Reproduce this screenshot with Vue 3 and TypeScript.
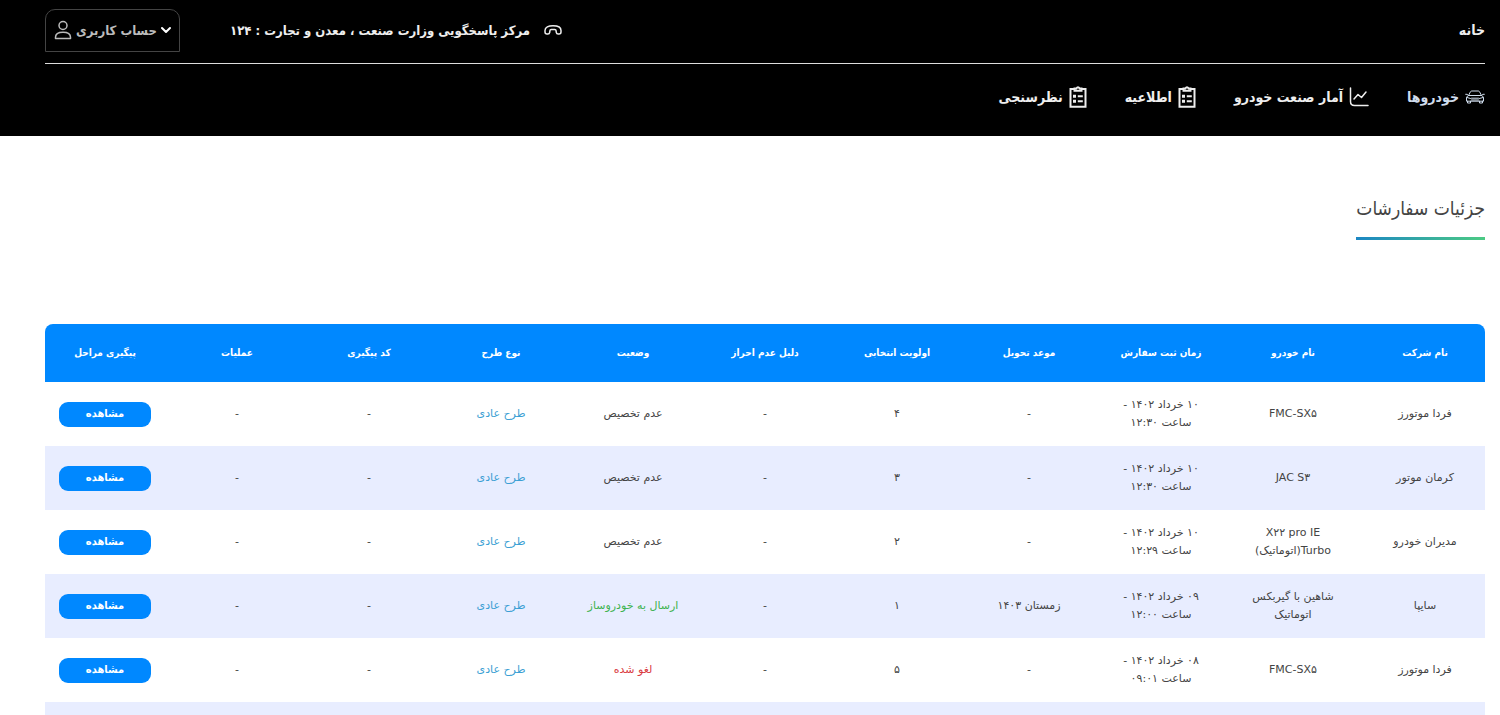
<script setup lang="ts">
type Tone = 'plain' | 'success' | 'danger'

interface Order {
  company: string
  car: string[]
  registered: string[]
  delivery: string
  priority: string
  status: string
  tone: Tone
}

const columns: string[] = [
  'نام شرکت',
  'نام خودرو',
  'زمان ثبت سفارش',
  'موعد تحویل',
  'اولویت انتخابی',
  'دلیل عدم احراز',
  'وضعیت',
  'نوع طرح',
  'کد پیگیری',
  'عملیات',
  'پیگیری مراحل',
]

const orders: Order[] = [
  { company: 'فردا موتورز', car: ['FMC-SX۵'], registered: ['۱۰ خرداد ۱۴۰۲ -', 'ساعت ۱۲:۳۰'], delivery: '-', priority: '۴', status: 'عدم تخصیص', tone: 'plain' },
  { company: 'کرمان موتور', car: ['JAC S۳'], registered: ['۱۰ خرداد ۱۴۰۲ -', 'ساعت ۱۲:۳۰'], delivery: '-', priority: '۳', status: 'عدم تخصیص', tone: 'plain' },
  { company: 'مدیران خودرو', car: ['X۲۲ pro IE', 'Turbo(اتوماتیک)'], registered: ['۱۰ خرداد ۱۴۰۲ -', 'ساعت ۱۲:۲۹'], delivery: '-', priority: '۲', status: 'عدم تخصیص', tone: 'plain' },
  { company: 'سایپا', car: ['شاهین با گیربکس', 'اتوماتیک'], registered: ['۰۹ خرداد ۱۴۰۲ -', 'ساعت ۱۲:۰۰'], delivery: 'زمستان ۱۴۰۳', priority: '۱', status: 'ارسال به خودروساز', tone: 'success' },
  { company: 'فردا موتورز', car: ['FMC-SX۵'], registered: ['۰۸ خرداد ۱۴۰۲ -', 'ساعت ۰۹:۰۱'], delivery: '-', priority: '۵', status: 'لغو شده', tone: 'danger' },
]
</script>

<template>
  <div class="page" dir="rtl" lang="fa">
    <header class="site-header">
      <div class="top-bar">
        <a class="home" href="#">خانه</a>
        <div class="top-end">
          <p class="hotline">
            <svg class="phone" viewBox="0 0 18 12" aria-hidden="true">
              <path d="M1 6.500C1 3 4.500 1.800 9 1.800S17 3 17 6.500V8q0 2-2 2h-.8q-1.700 0-1.900-1.700L12.100 6.800Q12 5.500 10.700 5.500H7.300Q6 5.500 5.900 6.800L5.700 8.300Q5.500 10 3.800 10H3Q1 10 1 8Z" />
            </svg>
            <span>مرکز پاسخگویی وزارت صنعت ، معدن و تجارت : ۱۲۴</span>
          </p>
          <button class="account" type="button">
            <svg class="chevron" viewBox="0 0 10 8" aria-hidden="true"><path d="M1 2l4 4 4-4" /></svg>
            <span>حساب کاربری</span>
            <svg class="user" viewBox="0 0 18 20" aria-hidden="true">
              <circle cx="9" cy="5.500" r="4" />
              <path d="M1.500 18.500v-1.200c0-3 2.500-5 7.500-5s7.500 2 7.500 5v1.200Z" />
            </svg>
          </button>
        </div>
      </div>
      <nav class="main-nav">
        <a class="active" href="#">
          <svg class="car" viewBox="0 0 20 14" aria-hidden="true">
            <path d="M3.500 5.500L5.500 1.700Q5.900 1 6.700 1h6.600q.8 0 1.200.7L16.500 5.500M.7 4.300h1.500l1.300 1.200h13l1.300-1.200h1.500M3.500 5.500Q1.500 6.200 1.500 8v3.200h17V8q0-1.800-2-2.500M2.500 11.200V13h3v-1.800M14.500 11.200V13h3v-1.800M6.500 8.200h7M6.500 10h7M2 7.500l3.500 1M18 7.500l-3.500 1" />
          </svg>
          <span>خودروها</span>
        </a>
        <a href="#">
          <svg class="chart" viewBox="0 0 20 20" aria-hidden="true">
            <path d="M1.500 1v13.500q0 4 4 4H19M5 12l4-4.500 3.500 3 4.500-5.500" />
          </svg>
          <span>آمار صنعت خودرو</span>
        </a>
        <a v-for="label in ['اطلاعیه', 'نظرسنجی']" :key="label" href="#">
          <svg class="clipboard" viewBox="0 0 18 22" aria-hidden="true">
            <path d="M5.500 3H1.500v17.800h15V3h-4M5.500 4.800V2.500h1.800Q9-.2 10.700 2.500h1.800v2.300ZM8.800 10.200h5M8.800 15.200h5" />
            <path class="solid" d="M4 8.700h3v3H4ZM4 13.700h3v3H4Z" />
          </svg>
          <span>{{ label }}</span>
        </a>
      </nav>
    </header>

    <main class="content">
      <h1>جزئیات سفارشات</h1>
      <table class="orders">
        <thead>
          <tr>
            <th v-for="column in columns" :key="column" scope="col">{{ column }}</th>
          </tr>
        </thead>
        <tbody>
          <tr v-for="(order, i) in orders" :key="i">
            <td>{{ order.company }}</td>
            <td><div v-for="line in order.car" :key="line">{{ line }}</div></td>
            <td><div v-for="line in order.registered" :key="line">{{ line }}</div></td>
            <td>{{ order.delivery }}</td>
            <td>{{ order.priority }}</td>
            <td>-</td>
            <td :class="order.tone">{{ order.status }}</td>
            <td class="plan">طرح عادی</td>
            <td>-</td>
            <td>-</td>
            <td><button class="view" type="button">مشاهده</button></td>
          </tr>
          <tr aria-hidden="true"><td :colspan="columns.length"></td></tr>
        </tbody>
      </table>
    </main>
  </div>
</template>

<style>
body {
  margin: 0;
  background: #fff;
}
</style>

<style scoped>
.page {
  height: 100vh;
  overflow: hidden;
  font-family: "DejaVu Sans Condensed", "DejaVu Sans", sans-serif;
  color: #444;
}

svg {
  flex: none;
  fill: none;
  stroke: currentColor;
  stroke-width: 1.500;
  stroke-linecap: round;
  stroke-linejoin: round;
}

a {
  color: inherit;
  text-decoration: none;
}

.site-header {
  box-sizing: border-box;
  height: 136px;
  padding: 0 15px 0 45px;
  background: #000;
  color: #eee;
  font-size: 14px;
  font-weight: 700;
}

.top-bar {
  box-sizing: border-box;
  display: flex;
  align-items: center;
  justify-content: space-between;
  height: 64px;
  padding-bottom: 3px;
  border-bottom: 1px solid #ddd;
}

.top-end {
  display: flex;
  align-items: center;
  gap: 50px;
  font-size: 13px;
}

.hotline {
  display: flex;
  align-items: center;
  gap: 14px;
  margin: 0;
}

.phone {
  width: 18px;
  height: 12px;
}

.account {
  box-sizing: border-box;
  display: flex;
  align-items: center;
  justify-content: space-between;
  width: 135px;
  height: 43px;
  padding: 0 8px;
  border: 1px solid #444;
  border-radius: 10px 10px 0 0;
  background: #000;
  color: #bbb;
  font: inherit;
}

.chevron {
  width: 10px;
  height: 8px;
  color: #fff;
  stroke-width: 2;
}

.user {
  width: 18px;
  height: 20px;
}

.main-nav {
  display: flex;
  align-items: center;
  gap: 38px;
  height: 66px;
}

.main-nav a {
  display: flex;
  align-items: center;
  gap: 6px;
}

.main-nav .active {
  color: #cfdcec;
}

.car {
  width: 20px;
  height: 14px;
  stroke-width: 1;
}

.chart {
  width: 20px;
  height: 20px;
}

.clipboard {
  width: 18px;
  height: 22px;
  stroke-width: 2;
  stroke-linecap: butt;
  stroke-linejoin: miter;
}

.solid {
  fill: currentColor;
  stroke: none;
}

.content {
  padding: 56px 15px 0 45px;
}

h1 {
  width: fit-content;
  margin: 0 0 84px;
  padding-bottom: 13px;
  border-bottom: 3px solid;
  border-image: linear-gradient(to left, #4ccb83, #1b86c4) 1;
  font-size: 19px;
  font-weight: 400;
  line-height: 32px;
}

.orders {
  width: 100%;
  border-collapse: separate;
  border-spacing: 0;
  table-layout: fixed;
  font-family: "DejaVu Sans", sans-serif;
  font-size: 11px;
  line-height: 18px;
  text-align: center;
}

th,
td {
  box-sizing: border-box;
  height: 64px;
  padding: 0 12px;
}

th {
  height: 58px;
  background: #0088ff;
  color: #fff;
  font-family: "DejaVu Sans Condensed", "DejaVu Sans", sans-serif;
  font-size: 10px;
  font-weight: 700;
  white-space: nowrap;
}

th:first-child,
th:last-child {
  width: 126px;
}

th:first-child {
  border-radius: 0 8px 0 0;
}

th:last-child {
  border-radius: 8px 0 0 0;
}

th:first-child,
td:first-child {
  padding: 0 8px 0 14px;
}

th:last-child,
td:last-child {
  padding: 0 20px 0 14px;
}

tbody tr:nth-child(even) {
  background: #e8edff;
}

.plan {
  color: #3c9fd4;
}

.success {
  color: #3eb34f;
}

.danger {
  color: #d93a3f;
}

.view {
  display: block;
  width: 100%;
  height: 25px;
  padding: 0;
  border: 0;
  border-radius: 9px;
  background: #0088ff;
  color: #fff;
  font-family: "DejaVu Sans Condensed", "DejaVu Sans", sans-serif;
  font-size: 11px;
  font-weight: 700;
  line-height: 22px;
}
</style>
